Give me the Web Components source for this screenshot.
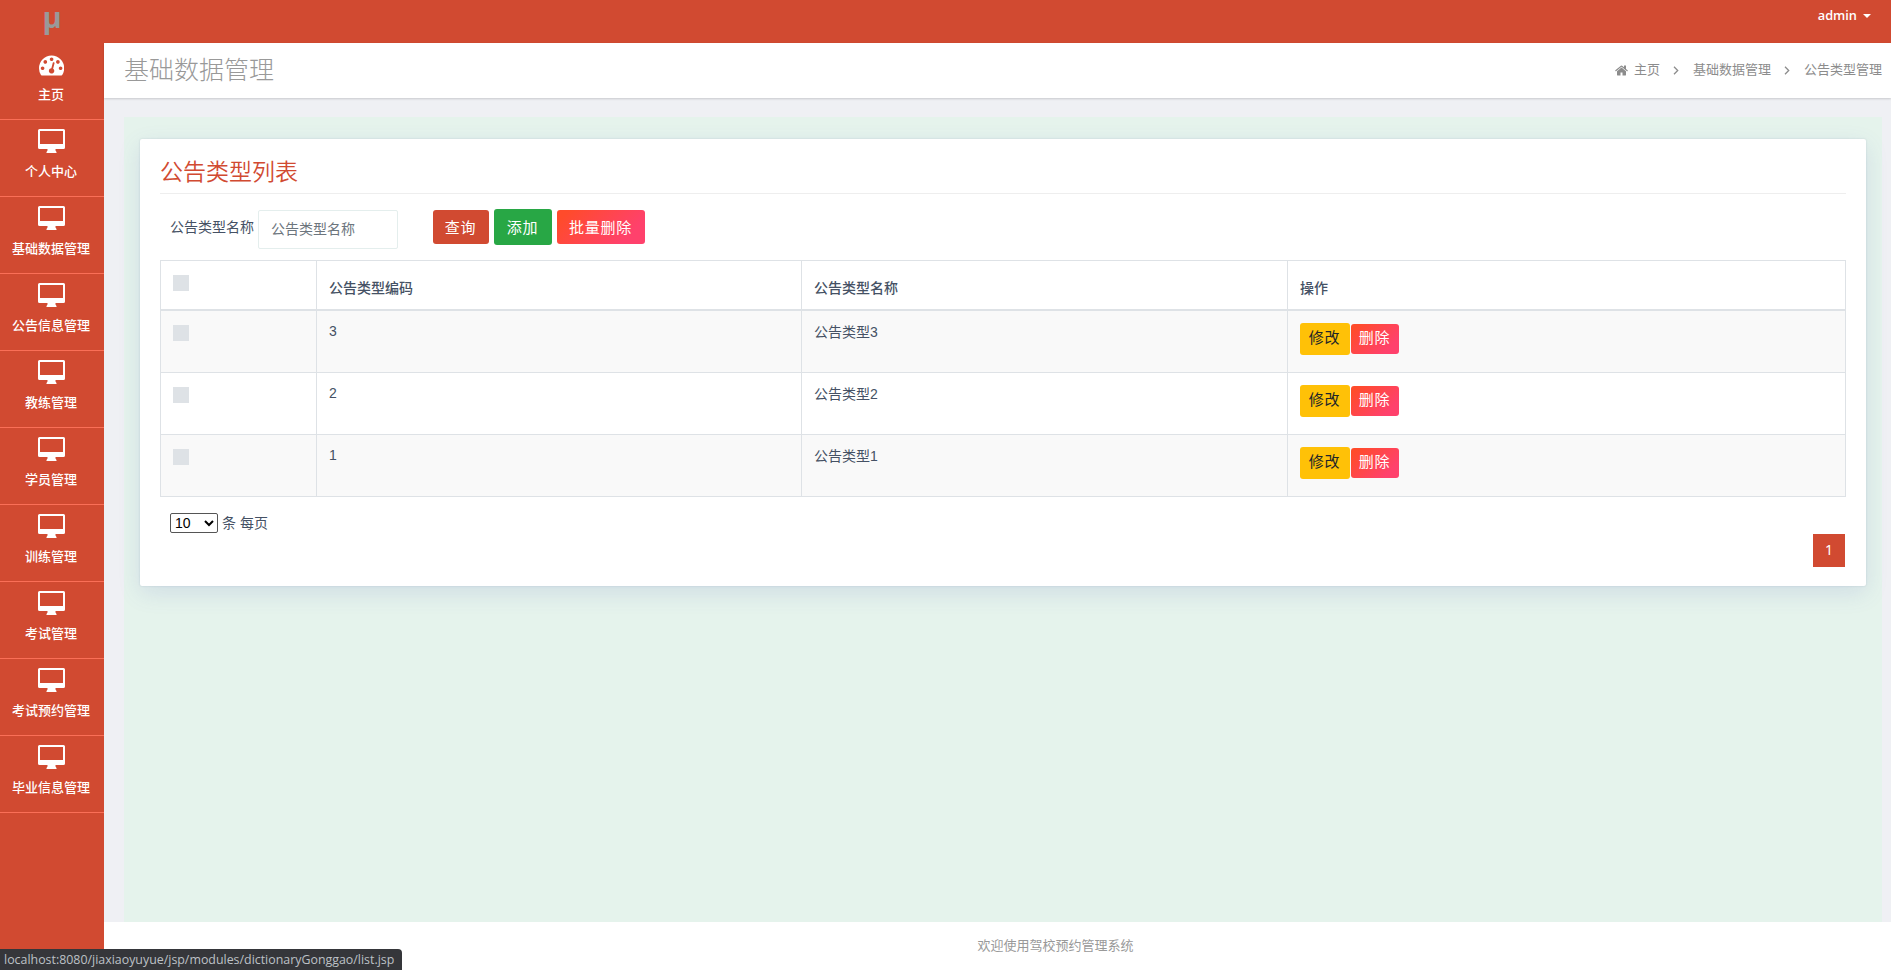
<!DOCTYPE html>
<html lang="zh-CN">
<head>
<meta charset="utf-8">
<title>公告类型管理</title>
<style>
    html, body {
        margin: 0;
        height: 100%;
        overflow: hidden;
        background: #eff0f4;
        font-family: "Liberation Sans", "Noto Sans CJK SC", sans-serif;
    }
</style>
</head>
<body>
<admin-layout>
    <side-nav slot="side">
        <nav-item icon="gauge">主页</nav-item>
        <nav-item>个人中心</nav-item>
        <nav-item>基础数据管理</nav-item>
        <nav-item>公告信息管理</nav-item>
        <nav-item>教练管理</nav-item>
        <nav-item>学员管理</nav-item>
        <nav-item>训练管理</nav-item>
        <nav-item>考试管理</nav-item>
        <nav-item>考试预约管理</nav-item>
        <nav-item>毕业信息管理</nav-item>
    </side-nav>
    <user-bar slot="top">admin</user-bar>
    <page-head slot="head" title-text="基础数据管理" path="主页,基础数据管理,公告类型管理"></page-head>
    <list-card heading="公告类型列表">
        <search-bar label="公告类型名称">
            <action-button kind="primary">查询</action-button>
            <action-button kind="success">添加</action-button>
            <action-button kind="danger">批量删除</action-button>
        </search-bar>
        <data-table></data-table>
        <page-size></page-size>
        <page-links></page-links>
    </list-card>
    <span slot="foot">欢迎使用驾校预约管理系统</span>
</admin-layout>
<status-tip>localhost:8080/jiaxiaoyuyue/jsp/modules/dictionaryGonggao/list.jsp</status-tip>

<script>
const ICONS = {
    gauge: `<svg width="25.2" height="25.2" viewBox="0 0 1792 1792"><path fill="currentColor" d="M384 1152q0-53-37.5-90.5t-90.5-37.5-90.5 37.5-37.5 90.5 37.5 90.5 90.5 37.5 90.5-37.5 37.5-90.5zm192-448q0-53-37.5-90.5t-90.5-37.5-90.5 37.5-37.5 90.5 37.5 90.5 90.5 37.5 90.5-37.5 37.5-90.5zm428 481l101-382q6-26-7.5-48.5t-38.5-29.5-48 6.5-30 39.5l-101 382q-60 5-107 43.5t-63 98.5q-20 77 20 146t117 89 146-20 89-117q16-60-6-117t-72-91zm660-33q0-53-37.5-90.5t-90.5-37.5-90.5 37.5-37.5 90.5 37.5 90.5 90.5 37.5 90.5-37.5 37.5-90.5zm-640-640q0-53-37.5-90.5t-90.5-37.5-90.5 37.5-37.5 90.5 37.5 90.5 90.5 37.5 90.5-37.5 37.5-90.5zm448 192q0-53-37.5-90.5t-90.5-37.5-90.5 37.5-37.5 90.5 37.5 90.5 90.5 37.5 90.5-37.5 37.5-90.5zm320 448q0 261-141 483-19 29-54 29h-1402q-35 0-54-29-141-221-141-483 0-182 71-348t191-286 286-191 348-71 348 71 286 191 191 286 71 348z"/></svg>`,
    desktop: `<svg width="27" height="24" viewBox="0 0 27 24"><path fill="currentColor" fill-rule="evenodd" d="M1.500 0h24a1.500 1.500 0 0 1 1.500 1.500v17a1.500 1.500 0 0 1-1.500 1.500H17.500v1.500l1 1.500v1h-10v-1l1-1.500V20h-8A1.500 1.500 0 0 1 0 18.500v-17A1.500 1.500 0 0 1 1.500 0zM2 2v13h23V2z"/></svg>`,
    home: `<svg width="13" height="13" viewBox="64 128 1664 1536"><path fill="currentColor" d="M1472 992v480q0 26-19 45t-45 19h-384v-384h-256v384h-384q-26 0-45-19t-19-45v-480q0-1 .5-3t.5-3l575-474 575 474q1 2 1 6zm223-69l-62 74q-8 9-21 11h-3q-13 0-21-7l-692-577-692 577q-12 8-24 7-13-2-21-11l-62-74q-8-10-7-23.5t11-21.5l719-599q32-26 76-26t76 26l244 204v-195q0-14 9-23t23-9h192q14 0 23 9t9 23v408l219 182q10 8 11 23.5t-7 23.5z"/></svg>`,
    angle: `<svg width="6" height="9" viewBox="0 0 6 9"><path fill="none" stroke="currentColor" stroke-width="1.3" d="M1 .8l3.700 3.700L1 8.200"/></svg>`
};

class AdminLayout extends HTMLElement {
    connectedCallback() {
        this.attachShadow({ mode: 'open' });
        this.shadowRoot.innerHTML = `
            <style>
                :host {
                    display: grid;
                    grid-template-columns: 104px 1fr;
                    grid-template-rows: 43px 1fr;
                    height: 100vh;
                }
                aside {
                    grid-row: 1 / 3;
                    background: #d14a31;
                }
                header {
                    background: #d14a31;
                }
                .page {
                    display: flex;
                    flex-direction: column;
                    min-width: 0;
                }
                main {
                    flex: 1;
                    margin: 19px 9px 0 20px;
                    padding: 22px 16px 0;
                    background: #e5f3ec;
                }
                footer {
                    box-sizing: border-box;
                    height: 48px;
                    padding-right: 0;
                    padding-left: 116px;
                    line-height: 47px;
                    background: #fff;
                    color: #999;
                    font-size: 13px;
                    text-align: center;
                }
            </style>
            <aside><slot name="side"></slot></aside>
            <header><slot name="top"></slot></header>
            <div class="page">
                <slot name="head"></slot>
                <main><slot></slot></main>
                <footer><slot name="foot"></slot></footer>
            </div>
        `;
    }
}

class SideNav extends HTMLElement {
    connectedCallback() {
        this.attachShadow({ mode: 'open' });
        this.shadowRoot.innerHTML = `
            <style>
                :host {
                    display: block;
                    color: #fff;
                }
                .logo {
                    height: 43px;
                    line-height: 33px;
                    font-family: "Open Sans", sans-serif;
                    font-size: 29px;
                    font-weight: 700;
                    text-align: center;
                    color: #999;
                }
            </style>
            <div class="logo">μ</div>
            <slot></slot>
        `;
    }
}

class NavItem extends HTMLElement {
    connectedCallback() {
        const icon = this.getAttribute('icon') || 'desktop';
        this.attachShadow({ mode: 'open' });
        this.shadowRoot.innerHTML = `
            <style>
                :host {
                    display: flex;
                    flex-direction: column;
                    align-items: center;
                    box-sizing: border-box;
                    height: 77px;
                    padding: 9px 2px 0 0;
                    border-bottom: 1px solid #fa6f57;
                    font-size: 13px;
                    font-weight: 500;
                }
                .icon {
                    height: 24px;
                    display: flex;
                    align-items: center;
                    margin-left: 1px;
                }
                :host([icon="gauge"]) .icon {
                    padding-top: 2px;
                    height: 22px;
                }
                .label {
                    margin-top: 9px;
                    line-height: 20px;
                }
            </style>
            <div class="icon">${ICONS[icon]}</div>
            <div class="label"><slot></slot></div>
        `;
    }
}

class UserBar extends HTMLElement {
    connectedCallback() {
        this.attachShadow({ mode: 'open' });
        this.shadowRoot.innerHTML = `
            <style>
                :host {
                    display: flex;
                    justify-content: flex-end;
                    align-items: center;
                    height: 30px;
                    padding-right: 20px;
                    color: #fff;
                    font: 600 12.8px "Open Sans", sans-serif;
                }
                .caret {
                    margin: 2px 0 0 6px;
                    border: 4px solid transparent;
                    border-top-color: #fff;
                    border-bottom: 0;
                }
            </style>
            <slot></slot><span class="caret"></span>
        `;
    }
}

class PageHead extends HTMLElement {
    connectedCallback() {
        const crumbs = this.getAttribute('path').split(',')
            .map(text => `<span>${text}</span>`)
            .join(ICONS.angle);
        this.attachShadow({ mode: 'open' });
        this.shadowRoot.innerHTML = `
            <style>
                :host {
                    display: flex;
                    justify-content: space-between;
                    align-items: center;
                    height: 55px;
                    padding: 0 9px 0 20px;
                    background: #fff;
                    box-shadow: 0 1px 2px rgba(0, 0, 0, 0.16);
                    color: #999;
                }
                h1 {
                    margin: 0;
                    font-size: 25px;
                    font-weight: 300;
                    line-height: 55px;
                }
                nav {
                    display: flex;
                    align-items: center;
                    padding-bottom: 1px;
                    font-size: 13px;
                    color: #8c8c8c;
                }
                nav span {
                    line-height: 18px;
                    padding-bottom: 1px;
                }
                nav svg + span {
                    margin-left: 14px;
                }
                nav span + svg {
                    margin-left: 13px;
                }
                nav svg:first-child + span {
                    margin-left: 6px;
                }
            </style>
            <h1>${this.getAttribute('title-text')}</h1>
            <nav>${ICONS.home}${crumbs}</nav>
        `;
    }
}

class ListCard extends HTMLElement {
    connectedCallback() {
        this.attachShadow({ mode: 'open' });
        this.shadowRoot.innerHTML = `
            <style>
                :host {
                    display: block;
                    box-sizing: border-box;
                    height: 447px;
                    padding: 0 20px;
                    background: #fff;
                    border-radius: 2px;
                    box-shadow: 0 0 2px rgba(69, 90, 120, 0.2), 0 7px 22px rgba(90, 100, 190, 0.15);
                    color: #455164;
                    font-size: 14px;
                }
                h3 {
                    margin: 0;
                    height: 54px;
                    line-height: 67px;
                    border-bottom: 1px solid #eee;
                    color: #d14a31;
                    font-size: 23px;
                    font-weight: 350;
                }
            </style>
            <h3>${this.getAttribute('heading')}</h3>
            <slot></slot>
        `;
    }
}

class SearchBar extends HTMLElement {
    connectedCallback() {
        const label = this.getAttribute('label');
        this.attachShadow({ mode: 'open' });
        this.shadowRoot.innerHTML = `
            <style>
                :host {
                    display: flex;
                    align-items: flex-start;
                    height: 50px;
                    padding: 16px 0 0 10px;
                }
                label {
                    line-height: 35px;
                }
                input {
                    box-sizing: border-box;
                    width: 140px;
                    height: 39px;
                    margin: 0 35px 0 4px;
                    padding: 0 12px 2px;
                    border: 1px solid #e4eeed;
                    border-radius: 2px;
                    font: inherit;
                }
                input::placeholder {
                    color: #6c757d;
                }
                .actions {
                    display: flex;
                    align-items: center;
                    gap: 5px;
                    height: 34px;
                }
            </style>
            <label>${label}</label>
            <input placeholder="${label}">
            <div class="actions"><slot></slot></div>
        `;
    }
}

class ActionButton extends HTMLElement {
    connectedCallback() {
        this.attachShadow({ mode: 'open' });
        this.shadowRoot.innerHTML = `
            <style>
                :host {
                    display: inline-flex;
                    align-items: center;
                    justify-content: center;
                    box-sizing: border-box;
                    width: 56px;
                    height: 34px;
                    padding: 0 1px 2px 0;
                    border-radius: 3px;
                    background: #d14a31;
                    color: #fff;
                    font-size: 15px;
                    letter-spacing: 0.8px;
                    cursor: pointer;
                }
                :host([kind="success"]) {
                    width: 58px;
                    height: 36px;
                    background: #28a745;
                }
                :host([kind="danger"]) {
                    width: 88px;
                    background: linear-gradient(135deg, #ff4b2b 10%, #ff416c 80%);
                }
                :host([kind="warning"]) {
                    width: 50px;
                    height: 32px;
                    background: #ffc107;
                    color: #212529;
                }
                :host([kind="danger"][small]) {
                    width: 48px;
                    height: 30px;
                }
            </style>
            <slot></slot>
        `;
    }
}

class DataTable extends HTMLElement {
    connectedCallback() {
        const rows = [3, 2, 1].map(n => `
            <tr>
                <td><i class="check"></i></td>
                <td>${n}</td>
                <td class="name">公告类型${n}</td>
                <td>
                    <div class="ops">
                        <action-button kind="warning">修改</action-button>
                        <action-button kind="danger" small>删除</action-button>
                    </div>
                </td>
            </tr>`).join('');
        this.attachShadow({ mode: 'open' });
        this.shadowRoot.innerHTML = `
            <style>
                :host {
                    display: block;
                    height: 237px;
                }
                table {
                    width: 100%;
                    table-layout: fixed;
                    border-collapse: separate;
                    border-spacing: 0;
                    border: solid #dee2e6;
                    border-width: 1px 0 0 1px;
                }
                th, td {
                    box-sizing: border-box;
                    padding: 12px;
                    border: solid #dee2e6;
                    border-width: 0 1px 1px 0;
                    text-align: left;
                    vertical-align: top;
                    line-height: 18px;
                }
                th {
                    height: 50px;
                    padding: 18px 12px 0;
                    border-bottom-width: 2px;
                    font-weight: 500;
                }
                th:first-child {
                    padding-top: 14px;
                }
                td {
                    height: 62px;
                }
                tbody tr:nth-child(odd) {
                    background: #f9f9f9;
                }
                td:nth-child(2) {
                    padding-top: 11px;
                }
                .check {
                    display: block;
                    width: 16px;
                    height: 16px;
                    background: #dee2e6;
                }
                td .check {
                    margin-top: 2px;
                }
                .ops {
                    display: flex;
                    align-items: center;
                    gap: 1px;
                }
            </style>
            <table>
                <colgroup><col style="width:156px"><col style="width:485px"><col style="width:486px"><col></colgroup>
                <thead>
                    <tr><th><i class="check"></i></th><th>公告类型编码</th><th>公告类型名称</th><th>操作</th></tr>
                </thead>
                <tbody>${rows}</tbody>
            </table>
        `;
    }
}

class PageSize extends HTMLElement {
    connectedCallback() {
        this.attachShadow({ mode: 'open' });
        this.shadowRoot.innerHTML = `
            <style>
                :host {
                    display: flex;
                    align-items: center;
                    gap: 4px;
                    height: 20px;
                    padding: 16px 0 0 10px;
                }
                select {
                    width: 48px;
                    height: 20px;
                    padding: 0;
                    background: #fff;
                    border: 1px solid #555;
                    border-radius: 2px;
                    color: #000;
                    font: inherit;
                }
                span {
                    padding-bottom: 3px;
                }
            </style>
            <select><option>10</option><option>25</option><option>50</option></select>
            <span>条 每页</span>
        `;
    }
}

class PageLinks extends HTMLElement {
    connectedCallback() {
        this.attachShadow({ mode: 'open' });
        this.shadowRoot.innerHTML = `
            <style>
                :host {
                    display: flex;
                    justify-content: flex-end;
                    padding: 1px 1px 0 0;
                }
                a {
                    width: 32px;
                    height: 33px;
                    line-height: 32px;
                    background: #d14a31;
                    color: #fff;
                    font-family: "Noto Sans", sans-serif;
                    text-align: center;
                }
            </style>
            <a>1</a>
        `;
    }
}

class StatusTip extends HTMLElement {
    connectedCallback() {
        this.attachShadow({ mode: 'open' });
        this.shadowRoot.innerHTML = `
            <style>
                :host {
                    position: absolute;
                    left: 0;
                    bottom: 0;
                    box-sizing: border-box;
                    width: 402px;
                    height: 21px;
                    padding-left: 4px;
                    line-height: 21px;
                    background: #35363a;
                    border-radius: 0 4px 0 0;
                    color: #bdc1c6;
                    font-family: "Open Sans", sans-serif;
                    font-size: 12.4px;
                    white-space: nowrap;
                }
            </style>
            <slot></slot>
        `;
    }
}

customElements.define('admin-layout', AdminLayout);
customElements.define('side-nav', SideNav);
customElements.define('nav-item', NavItem);
customElements.define('user-bar', UserBar);
customElements.define('page-head', PageHead);
customElements.define('list-card', ListCard);
customElements.define('search-bar', SearchBar);
customElements.define('action-button', ActionButton);
customElements.define('data-table', DataTable);
customElements.define('page-size', PageSize);
customElements.define('page-links', PageLinks);
customElements.define('status-tip', StatusTip);
</script>
</body>
</html>
